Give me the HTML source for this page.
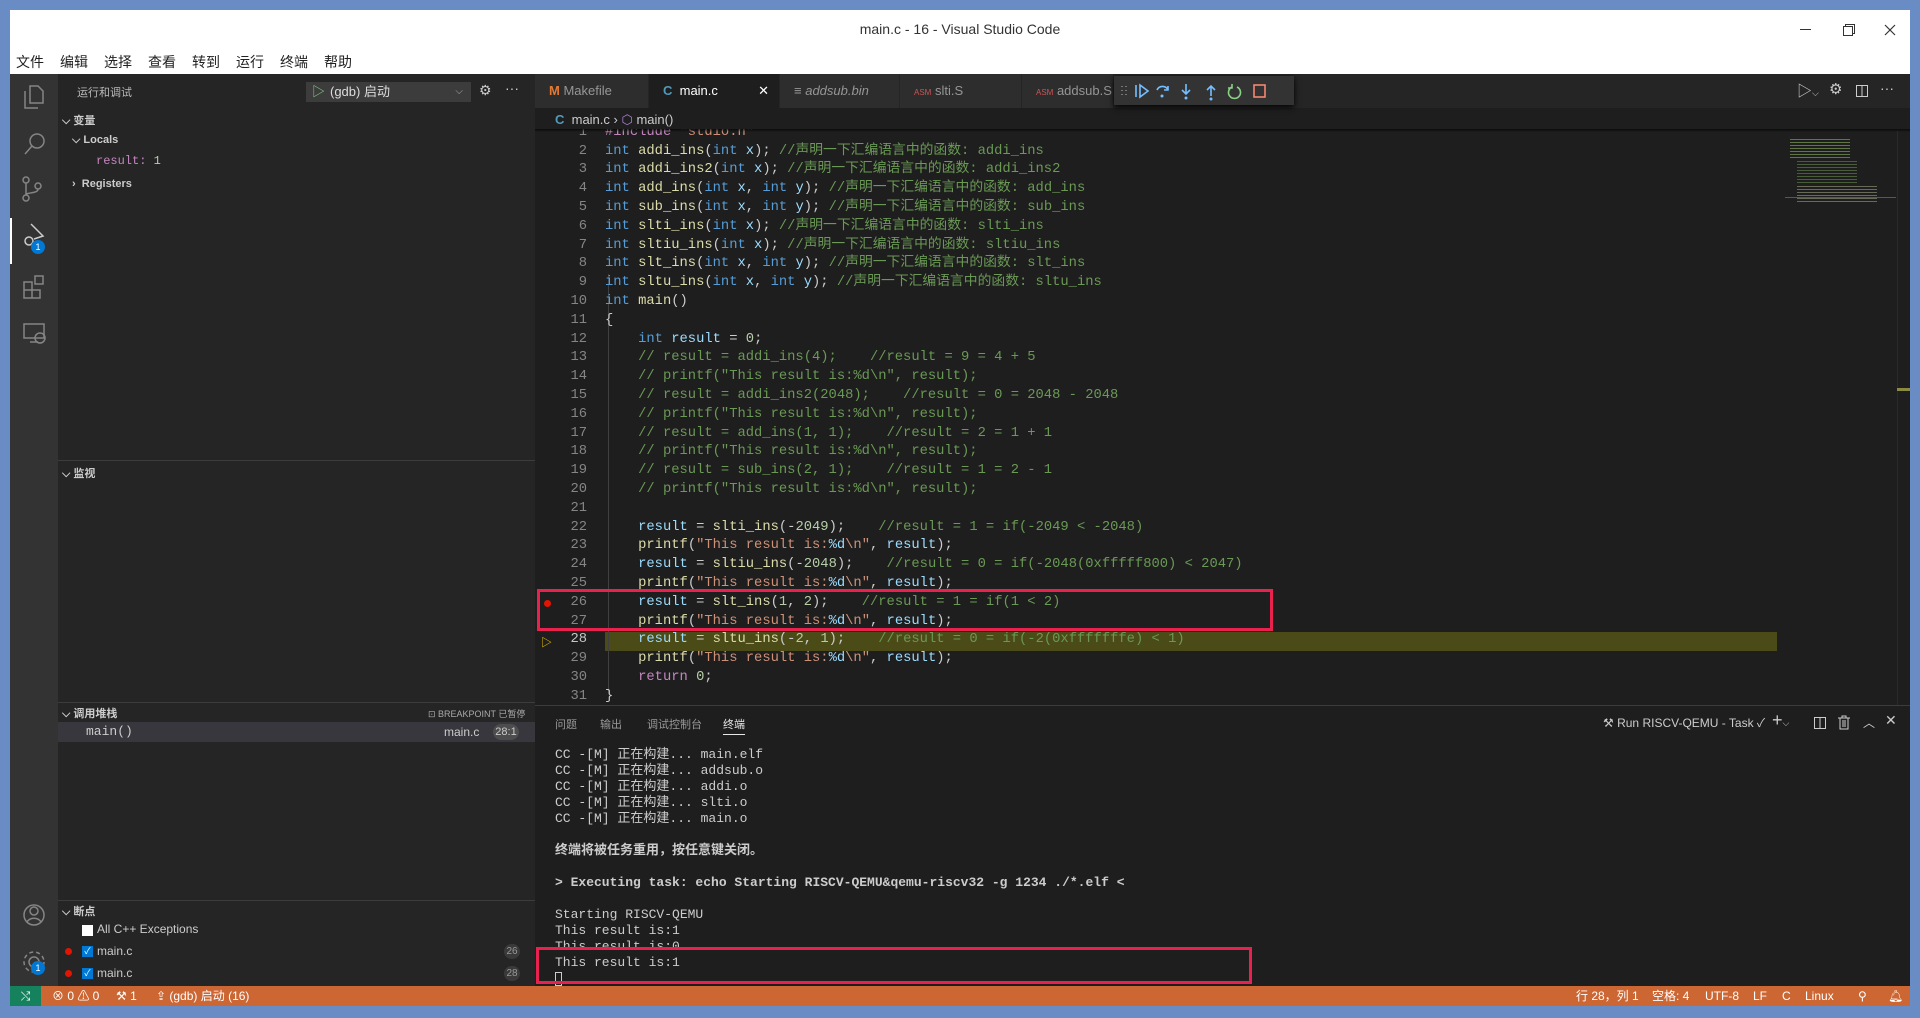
<!DOCTYPE html>
<html><head><meta charset="utf-8">
<style>
*{margin:0;padding:0;box-sizing:border-box}
body{width:1920px;height:1018px;background:#6a8cc4;position:relative;overflow:hidden;font-family:"Liberation Sans","Noto Sans CJK SC",sans-serif;color:#ccc}
.a{position:absolute}
.mono{font-family:"Liberation Mono","Noto Sans CJK SC",monospace}
#title{left:10px;top:10px;width:1900px;height:64px;background:#fff}
#menu span{margin-right:16px}
.ln{position:absolute;left:0;width:52px;text-align:right;color:#858585}
.cl{position:absolute;left:70px;white-space:pre}
.k{color:#569cd6}.v{color:#9cdcfe}.f{color:#dcdcaa}.s{color:#ce9178}.c{color:#6a9955}.n{color:#b5cea8}.p{color:#c586c0}.t{color:#d4d4d4}
.tab{position:absolute;top:0;height:34px;line-height:34px;font-size:13px;padding-left:14px;background:#2d2d2d;color:#969696;border-right:1px solid #252526}
.sec{position:absolute;left:0;width:482px;font-size:11px;font-weight:bold;color:#ccc}
.term div{height:16px;line-height:16px;white-space:pre}
.st{position:absolute;top:0;line-height:20px;font-size:12px;color:#fff}
</style></head><body>
<div class="a" id="title">
 <div class="a" style="left:0;width:1900px;top:11px;text-align:center;font-size:14px;color:#333">main.c - 16 - Visual Studio Code</div>
 <div class="a" style="left:1790px;top:19px;width:11px;height:1px;background:#333"></div>
 <svg class="a" style="left:1833px;top:14px" width="12" height="12"><rect x="0.5" y="2.5" width="9" height="9" fill="none" stroke="#333"/><path d="M2.5 2.5V0.5H11.5V9.5H9.5" fill="none" stroke="#333"/></svg>
 <svg class="a" style="left:1874px;top:14px" width="12" height="12"><path d="M1 1L11 11M11 1L1 11" stroke="#333" stroke-width="1.2"/></svg>
 <div class="a" id="menu" style="left:6px;top:42px;font-size:14px;color:#222">
  <span>文件</span><span>编辑</span><span>选择</span><span>查看</span><span>转到</span><span>运行</span><span>终端</span><span>帮助</span></div>
</div>
<!-- activity bar -->
<div class="a" style="left:10px;top:74px;width:48px;height:912px;background:#333"></div>
<div class="a" style="left:10px;top:218px;width:2px;height:46px;background:#fff"></div>
<svg class="a" style="left:10px;top:74px" width="48" height="912" fill="none" stroke="#858585" stroke-width="1.5">
 <path d="M20 12h8l5 5v12H20zM15 17v17h13"/>
 <circle cx="27" cy="67" r="7"/><path d="M22 72l-7 8"/>
 <circle cx="16" cy="106" r="3"/><circle cx="16" cy="124" r="3"/><circle cx="28" cy="112" r="3"/><path d="M16 109v12M28 115c0 5-12 3-12 6"/>
 <path d="M21 150l12 12-9 3" stroke="#ccc"/><circle cx="19" cy="167" r="4" stroke="#ccc"/>
 <path d="M14 208h8v8h-8zM14 216h8v8h-8zM22 216h8v8h-8zM25 202h8v8h-8z"/>
 <path d="M14 250h20v14H14zM20 268h8"/><circle cx="30" cy="264" r="5"/>
 <circle cx="24" cy="841" r="10"/><circle cx="24" cy="837" r="4"/><path d="M17 848c3-5 11-5 14 0"/>
 <circle cx="24" cy="888" r="5"/><circle cx="24" cy="888" r="10" stroke-dasharray="4 3"/>
</svg>
<div class="a" style="left:31px;top:240px;width:14px;height:14px;border-radius:7px;background:#0078d4;color:#fff;font-size:9px;text-align:center;line-height:14px">1</div>
<div class="a" style="left:31px;top:961px;width:14px;height:14px;border-radius:7px;background:#0078d4;color:#fff;font-size:9px;text-align:center;line-height:14px">1</div>
<!-- sidebar -->
<div class="a" style="left:58px;top:74px;width:477px;height:912px;background:#252526">
 <div class="a" style="left:19px;top:10px;font-size:11px;color:#bbb">运行和调试</div>
 <div class="a" style="left:248px;top:8px;width:165px;height:20px;background:#3c3c3c;font-size:13px;line-height:20px;color:#ddd;padding-left:24px">(gdb) 启动<span style="position:absolute;left:6px;color:#89d185">▷</span><span style="position:absolute;right:8px;color:#aaa;font-size:10px">⌵</span></div>
 <div class="a" style="left:421px;top:8px;font-size:14px;color:#ccc">⚙</div>
 <div class="a" style="left:447px;top:6px;font-size:14px;color:#ccc">···</div>
 <div class="sec" style="top:38px;left:4px">⌵ 变量</div>
 <div class="a" style="left:14px;top:60px;font-size:11px;font-weight:bold">⌵ Locals</div>
 <div class="a mono" style="left:38px;top:80px;font-size:12px"><span style="color:#c586c0">result:</span> <span class="n">1</span></div>
 <div class="a" style="left:14px;top:104px;font-size:11px;font-weight:bold">›&nbsp; Registers</div>
 <div class="a" style="left:0;top:386px;width:477px;height:1px;background:#3c3c3c"></div>
 <div class="sec" style="top:391px;left:4px">⌵ 监视</div>
 <div class="a" style="left:0;top:628px;width:477px;height:1px;background:#3c3c3c"></div>
 <div class="sec" style="top:631px;left:4px">⌵ 调用堆栈</div>
 <div class="a" style="left:370px;top:633px;font-size:9px;color:#aaa">⊡ BREAKPOINT 已暂停</div>
 <div class="a" style="left:0;top:648px;width:477px;height:20px;background:#37373d"></div>
 <div class="a mono" style="left:28px;top:650px;font-size:13px;color:#ccc">main()</div>
 <div class="a" style="left:386px;top:651px;font-size:12px;color:#ccc">main.c</div>
 <div class="a" style="left:435px;top:650px;width:26px;height:16px;border-radius:8px;background:#4d4d4d;font-size:11px;text-align:center;line-height:16px">28:1</div>
 <div class="a" style="left:0;top:826px;width:477px;height:1px;background:#3c3c3c"></div>
 <div class="sec" style="top:829px;left:4px">⌵ 断点</div>
 <div class="a" style="left:24px;top:851px;width:11px;height:11px;background:#fff"></div>
 <div class="a" style="left:39px;top:848px;font-size:12px">All C++ Exceptions</div>
 <div class="a" style="left:7px;top:874px;width:7px;height:7px;border-radius:4px;background:#e51400"></div>
 <div class="a" style="left:24px;top:872px;width:11px;height:11px;background:#0078d4;color:#fff;font-size:9px;line-height:11px;text-align:center">✓</div>
 <div class="a" style="left:39px;top:870px;font-size:12px">main.c</div>
 <div class="a" style="left:446px;top:870px;width:16px;height:15px;border-radius:8px;background:#3a3a3a;font-size:10px;text-align:center;line-height:15px;color:#999">26</div>
 <div class="a" style="left:7px;top:896px;width:7px;height:7px;border-radius:4px;background:#e51400"></div>
 <div class="a" style="left:24px;top:894px;width:11px;height:11px;background:#0078d4;color:#fff;font-size:9px;line-height:11px;text-align:center">✓</div>
 <div class="a" style="left:39px;top:892px;font-size:12px">main.c</div>
 <div class="a" style="left:446px;top:892px;width:16px;height:15px;border-radius:8px;background:#3a3a3a;font-size:10px;text-align:center;line-height:15px;color:#999">28</div>
</div>
<!-- editor -->
<div class="a" style="left:535px;top:74px;width:1375px;height:634px;background:#1e1e1e;overflow:hidden">
 <div class="a" style="left:70px;top:558px;width:1172px;height:19px;background:#4b4b18"></div>
 <div class="a" style="left:73px;top:200px;width:1px;height:420px;background:#404040"></div>
 <div class="a mono" style="left:0;top:0;width:1250px;height:634px;font-size:13.8px;line-height:18.8px">
  <div style="position:absolute;left:0;top:68.6px;width:1250px">
   <div class="ln" style="top:-18.8px">1</div><div class="cl" style="top:-18.8px"><span class="p">#include</span> <span class="s">"stdio.h"</span></div>
   <div class="ln" style="top:0">2</div><div class="cl" style="top:0"><span class="k">int</span> <span class="f">addi_ins</span>(<span class="k">int</span> <span class="v">x</span>); <span class="c">//声明一下汇编语言中的函数: addi_ins</span></div>
   <div class="ln" style="top:18.8px">3</div><div class="cl" style="top:18.8px"><span class="k">int</span> <span class="f">addi_ins2</span>(<span class="k">int</span> <span class="v">x</span>); <span class="c">//声明一下汇编语言中的函数: addi_ins2</span></div>
   <div class="ln" style="top:37.6px">4</div><div class="cl" style="top:37.6px"><span class="k">int</span> <span class="f">add_ins</span>(<span class="k">int</span> <span class="v">x</span>, <span class="k">int</span> <span class="v">y</span>); <span class="c">//声明一下汇编语言中的函数: add_ins</span></div>
   <div class="ln" style="top:56.4px">5</div><div class="cl" style="top:56.4px"><span class="k">int</span> <span class="f">sub_ins</span>(<span class="k">int</span> <span class="v">x</span>, <span class="k">int</span> <span class="v">y</span>); <span class="c">//声明一下汇编语言中的函数: sub_ins</span></div>
   <div class="ln" style="top:75.2px">6</div><div class="cl" style="top:75.2px"><span class="k">int</span> <span class="f">slti_ins</span>(<span class="k">int</span> <span class="v">x</span>); <span class="c">//声明一下汇编语言中的函数: slti_ins</span></div>
   <div class="ln" style="top:94px">7</div><div class="cl" style="top:94px"><span class="k">int</span> <span class="f">sltiu_ins</span>(<span class="k">int</span> <span class="v">x</span>); <span class="c">//声明一下汇编语言中的函数: sltiu_ins</span></div>
   <div class="ln" style="top:112.8px">8</div><div class="cl" style="top:112.8px"><span class="k">int</span> <span class="f">slt_ins</span>(<span class="k">int</span> <span class="v">x</span>, <span class="k">int</span> <span class="v">y</span>); <span class="c">//声明一下汇编语言中的函数: slt_ins</span></div>
   <div class="ln" style="top:131.6px">9</div><div class="cl" style="top:131.6px"><span class="k">int</span> <span class="f">sltu_ins</span>(<span class="k">int</span> <span class="v">x</span>, <span class="k">int</span> <span class="v">y</span>); <span class="c">//声明一下汇编语言中的函数: sltu_ins</span></div>
   <div class="ln" style="top:150.4px">10</div><div class="cl" style="top:150.4px"><span class="k">int</span> <span class="f">main</span>()</div>
   <div class="ln" style="top:169.2px">11</div><div class="cl" style="top:169.2px">{</div>
   <div class="ln" style="top:188px">12</div><div class="cl" style="top:188px">    <span class="k">int</span> <span class="v">result</span> = <span class="n">0</span>;</div>
   <div class="ln" style="top:206.8px">13</div><div class="cl c" style="top:206.8px">    // result = addi_ins(4);    //result = 9 = 4 + 5</div>
   <div class="ln" style="top:225.6px">14</div><div class="cl c" style="top:225.6px">    // printf("This result is:%d\n", result);</div>
   <div class="ln" style="top:244.4px">15</div><div class="cl c" style="top:244.4px">    // result = addi_ins2(2048);    //result = 0 = 2048 - 2048</div>
   <div class="ln" style="top:263.2px">16</div><div class="cl c" style="top:263.2px">    // printf("This result is:%d\n", result);</div>
   <div class="ln" style="top:282px">17</div><div class="cl c" style="top:282px">    // result = add_ins(1, 1);    //result = 2 = 1 + 1</div>
   <div class="ln" style="top:300.8px">18</div><div class="cl c" style="top:300.8px">    // printf("This result is:%d\n", result);</div>
   <div class="ln" style="top:319.6px">19</div><div class="cl c" style="top:319.6px">    // result = sub_ins(2, 1);    //result = 1 = 2 - 1</div>
   <div class="ln" style="top:338.4px">20</div><div class="cl c" style="top:338.4px">    // printf("This result is:%d\n", result);</div>
   <div class="ln" style="top:357.2px">21</div>
   <div class="ln" style="top:376px">22</div><div class="cl" style="top:376px">    <span class="v">result</span> = <span class="f">slti_ins</span>(-<span class="n">2049</span>);    <span class="c">//result = 1 = if(-2049 &lt; -2048)</span></div>
   <div class="ln" style="top:394.8px">23</div><div class="cl" style="top:394.8px">    <span class="f">printf</span>(<span class="s">"This result is:</span><span class="v">%d</span><span class="s">\n"</span>, <span class="v">result</span>);</div>
   <div class="ln" style="top:413.6px">24</div><div class="cl" style="top:413.6px">    <span class="v">result</span> = <span class="f">sltiu_ins</span>(-<span class="n">2048</span>);    <span class="c">//result = 0 = if(-2048(0xfffff800) &lt; 2047)</span></div>
   <div class="ln" style="top:432.4px">25</div><div class="cl" style="top:432.4px">    <span class="f">printf</span>(<span class="s">"This result is:</span><span class="v">%d</span><span class="s">\n"</span>, <span class="v">result</span>);</div>
   <div class="ln" style="top:451.2px">26</div><div class="cl" style="top:451.2px">    <span class="v">result</span> = <span class="f">slt_ins</span>(<span class="n">1</span>, <span class="n">2</span>);    <span class="c">//result = 1 = if(1 &lt; 2)</span></div>
   <div class="ln" style="top:470px">27</div><div class="cl" style="top:470px">    <span class="f">printf</span>(<span class="s">"This result is:</span><span class="v">%d</span><span class="s">\n"</span>, <span class="v">result</span>);</div>
   <div class="ln" style="top:488.8px;color:#c6c6c6">28</div><div class="cl" style="top:488.8px">    <span class="v">result</span> = <span class="f">sltu_ins</span>(-<span class="n">2</span>, <span class="n">1</span>);    <span class="c">//result = 0 = if(-2(0xfffffffe) &lt; 1)</span></div>
   <div class="ln" style="top:507.6px">29</div><div class="cl" style="top:507.6px">    <span class="f">printf</span>(<span class="s">"This result is:</span><span class="v">%d</span><span class="s">\n"</span>, <span class="v">result</span>);</div>
   <div class="ln" style="top:526.4px">30</div><div class="cl" style="top:526.4px">    <span class="p">return</span> <span class="n">0</span>;</div>
   <div class="ln" style="top:545.2px">31</div><div class="cl" style="top:545.2px">}</div>
  </div>
 </div>
 <!-- top chrome above code -->
 <div class="a" style="left:0;top:34px;width:1375px;height:21px;background:#1e1e1e"></div>
 <div class="a" style="left:0;top:0;width:1375px;height:34px;background:#252526"></div>
 <div class="tab" style="left:0;width:114px"><span style="color:#e37933;font-weight:bold">M</span> Makefile</div>
 <div class="tab" style="left:114px;width:131px;background:#1e1e1e;color:#fff"><span style="color:#519aba;font-weight:bold">C</span>&nbsp; main.c<span style="position:absolute;right:10px">✕</span></div>
 <div class="tab" style="left:245px;width:120px"><span>≡</span> <i>addsub.bin</i></div>
 <div class="tab" style="left:365px;width:122px"><span style="color:#c55;font-size:8px">ASM</span> slti.S</div>
 <div class="tab" style="left:487px;width:92px"><span style="color:#c55;font-size:8px">ASM</span> addsub.S</div>
 <div class="a" style="left:579px;top:2px;width:180px;height:29px;background:#333;box-shadow:0 2px 6px #000"></div>
 <svg class="a" style="left:579px;top:2px" width="180" height="29" fill="none" stroke-width="1.6">
  <path d="M8 10v1M8 14v1M8 18v1M12 10v1M12 14v1M12 18v1" stroke="#888"/>
  <path d="M22 9v12M26 9l8 6-8 6z" stroke="#75beff"/>
  <path d="M43 14a6 6 0 0 1 11 0M54 10v4h-4" stroke="#75beff"/><circle cx="48" cy="20" r="1.5" fill="#75beff" stroke="none"/>
  <path d="M72 8v10M68 14l4 4 4-4" stroke="#75beff"/><circle cx="72" cy="22" r="1.5" fill="#75beff" stroke="none"/>
  <path d="M97 20V10M93 14l4-4 4 4" stroke="#75beff"/><circle cx="97" cy="23" r="1.5" fill="#75beff" stroke="none"/>
  <path d="M118 11a6 6 0 1 0 5 0M118 8v4h-4" stroke="#89d185"/>
  <rect x="140" y="9" width="11" height="12" stroke="#f48771"/>
 </svg>
 <div class="a" style="left:1262px;top:6px;font-size:15px;color:#ccc">▷<span style="font-size:9px">⌵</span></div>
 <div class="a" style="left:1294px;top:6px;font-size:15px;color:#ccc">⚙</div>
 <svg class="a" style="left:1320px;top:10px" width="14" height="14" fill="none" stroke="#ccc"><rect x="1.5" y="1.5" width="11" height="11"/><path d="M7 1.5v11"/></svg>
 <div class="a" style="left:1345px;top:6px;font-size:14px">···</div>
 <div class="a" style="left:20px;top:38px;font-size:13px;color:#ccc"><span style="color:#519aba;font-weight:bold">C</span>&nbsp; main.c › <span style="color:#b180d7">⬡</span> main()</div>
 <div class="a" style="left:0;top:55px;width:1375px;height:3px;background:linear-gradient(#000a,#0000)"></div>
 <div class="a" style="left:9px;top:526px;width:7px;height:7px;border-radius:4px;background:#e51400"></div>
 <div class="a" style="left:6px;top:560px;font-size:11px;color:#ffcc00">▷</div>
 <div class="a" style="left:2px;top:515px;width:736px;height:42px;border:3px solid #e8214f"></div>
 <!-- minimap -->
 <div class="a" style="left:1250px;top:57px;width:111px;height:80px;opacity:.7">
  <div class="a" style="left:5px;top:8px;width:60px;height:20px;background:repeating-linear-gradient(#7a9a55 0 1px,#1e1e1e 1px 3px)"></div>
  <div class="a" style="left:12px;top:30px;width:60px;height:22px;background:repeating-linear-gradient(#5a7a45 0 1px,#1e1e1e 1px 3px)"></div>
  <div class="a" style="left:12px;top:55px;width:80px;height:18px;background:repeating-linear-gradient(#8a8a70 0 1px,#1e1e1e 1px 3px)"></div>
  <div class="a" style="left:0;top:66px;width:111px;height:1px;background:#4a7aa0"></div>
 </div>
 <div class="a" style="left:1362px;top:57px;width:1px;height:577px;background:#2a2a2a"></div>
 <div class="a" style="left:1362px;top:314px;width:13px;height:3px;background:#8a8a40"></div>
</div>
<!-- panel -->
<div class="a" style="left:535px;top:705px;width:1375px;height:281px;background:#1e1e1e;border-top:1px solid #3c3c3c">
 <div class="a" style="left:20px;top:10px;font-size:11px;color:#999">问题</div>
 <div class="a" style="left:65px;top:10px;font-size:11px;color:#999">输出</div>
 <div class="a" style="left:112px;top:10px;font-size:11px;color:#999">调试控制台</div>
 <div class="a" style="left:188px;top:10px;font-size:11px;color:#e7e7e7">终端</div>
 <div class="a" style="left:188px;top:28px;width:22px;height:1px;background:#e7e7e7"></div>
 <div class="a" style="left:1068px;top:8px;font-size:12px;color:#ccc">⚒ Run RISCV-QEMU - Task ✓</div>
 <div class="a" style="left:1237px;top:4px;font-size:18px;color:#ccc">+<span style="font-size:9px">⌵</span></div>
 <svg class="a" style="left:1278px;top:10px" width="14" height="14" fill="none" stroke="#ccc"><rect x="1.5" y="1.5" width="11" height="11"/><path d="M7 1.5v11"/></svg>
 <svg class="a" style="left:1302px;top:9px" width="14" height="15" fill="none" stroke="#ccc"><path d="M1 3h12M5 3V1h4v2M3 3v11h8V3M6 5v7M8 5v7"/></svg>
 <div class="a" style="left:1328px;top:8px;font-size:12px;color:#ccc">︿</div>
 <div class="a" style="left:1350px;top:6px;font-size:14px;color:#ccc">✕</div>
 <div class="a mono term" style="left:20px;top:41px;font-size:13px;color:#ccc">
  <div>CC -[M] 正在构建... main.elf</div>
  <div>CC -[M] 正在构建... addsub.o</div>
  <div>CC -[M] 正在构建... addi.o</div>
  <div>CC -[M] 正在构建... slti.o</div>
  <div>CC -[M] 正在构建... main.o</div>
  <div> </div>
  <div style="font-weight:bold">终端将被任务重用，按任意键关闭。</div>
  <div> </div>
  <div style="font-weight:bold">&gt; Executing task: echo Starting RISCV-QEMU&amp;qemu-riscv32 -g 1234 ./*.elf &lt;</div>
  <div> </div>
  <div>Starting RISCV-QEMU</div>
  <div>This result is:1</div>
  <div>This result is:0</div>
  <div>This result is:1</div>
  <div><span style="display:inline-block;width:7px;height:14px;border:1px solid #ccc;vertical-align:middle"></span></div>
 </div>
 <div class="a" style="left:1px;top:241px;width:716px;height:37px;border:3px solid #e8214f"></div>
</div>
<!-- status bar -->
<div class="a" style="left:10px;top:986px;width:1900px;height:20px;background:#cc6633">
 <div class="a" style="left:0;top:0;width:31px;height:20px;background:#16825d;color:#fff;font-size:12px;text-align:center;line-height:20px">⤭</div>
 <div class="st" style="left:42px">⊗ 0 ⚠ 0</div>
 <div class="st" style="left:106px">⚒ 1</div>
 <div class="st" style="left:146px">⇪ (gdb) 启动 (16)</div>
 <div class="st" style="left:1566px">行 28，列 1</div>
 <div class="st" style="left:1642px">空格: 4</div>
 <div class="st" style="left:1695px">UTF-8</div>
 <div class="st" style="left:1743px">LF</div>
 <div class="st" style="left:1772px">C</div>
 <div class="st" style="left:1795px">Linux</div>
 <div class="st" style="left:1848px">⚲</div>
 <div class="st" style="left:1878px">🔔︎</div>
</div>
</body></html>
